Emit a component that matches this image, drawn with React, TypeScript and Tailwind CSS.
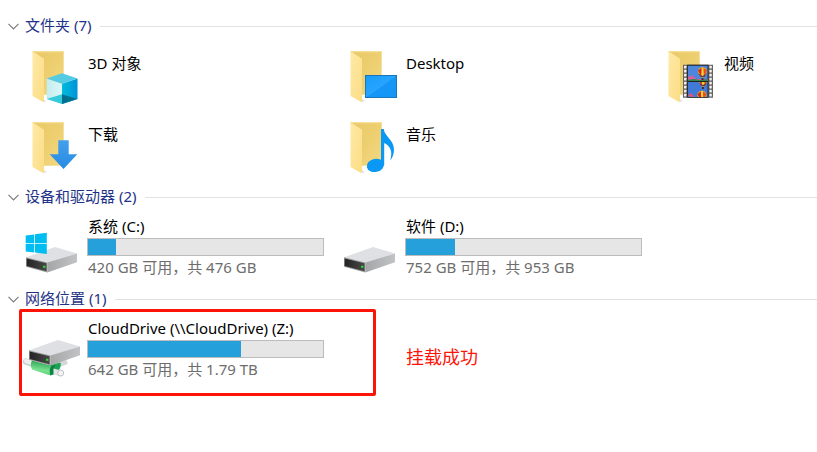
import type { ReactNode } from "react";

const FONT = "font-['Noto_Sans','Noto_Sans_CJK_SC',sans-serif]";

function FolderIcon({ id, children }: { id: string; children: ReactNode }) {
  return (
    <svg viewBox="0 0 60 64" className="h-16 w-[60px] shrink-0" aria-hidden="true">
      <defs>
        <linearGradient id={`${id}-back`} x1="0" y1="0" x2="1" y2="1">
          <stop offset="0" stopColor="#e9c968" />
          <stop offset="0.5" stopColor="#edcf70" />
          <stop offset="1" stopColor="#f3d983" />
        </linearGradient>
        <linearGradient id={`${id}-flap`} x1="0" y1="0" x2="1" y2="1">
          <stop offset="0" stopColor="#ffe9a6" />
          <stop offset="1" stopColor="#fbdd85" />
        </linearGradient>
      </defs>
      <path d="M23 58.5 27 57 24 55Z" fill="#e4e4e4" />
      <path d="M12.5 7.3H43.7V50.7H22Z" fill={`url(#${id}-back)`} />
      <path d="M12.5 7.3H43.7V8.3H14Z" fill="#f8e09a" />
      <path d="M12.5 7.3 24 14.8V56.5L23 58 12.5 52Z" fill={`url(#${id}-flap)`} />
      {children}
    </svg>
  );
}

function ObjectsIcon() {
  return (
    <FolderIcon id="objects">
      <defs>
        <linearGradient id="cube-left"><stop offset="0" stopColor="#c3edf0" /><stop offset="1" stopColor="#dcf7f7" /></linearGradient>
        <linearGradient id="cube-right"><stop offset="0" stopColor="#00bcdc" /><stop offset="1" stopColor="#0092d8" /></linearGradient>
      </defs>
      <path d="M24 51.5H27V57L24 56Z" fill="#fff" />
      <path d="M26.7 34.6 42 39.8V60L26.7 55Z" fill="url(#cube-left)" />
      <path d="M42 39.8 57.5 34.6V55L42 60Z" fill="url(#cube-right)" />
      <path d="M26.7 34.6 42 29.3 57.5 34.6 42 39.8Z" fill="#52cbe3" />
      <path d="M26.7 55 42 50.3V60Z" fill="#35cbdc" />
      <path d="M42 50.3 57.5 55 42 60Z" fill="#00708f" />
    </FolderIcon>
  );
}

function DesktopIcon() {
  return (
    <FolderIcon id="desktop">
      <defs>
        <linearGradient id="screen" x1="0" y1="0" x2="1" y2="1"><stop offset="0" stopColor="#189cfb" /><stop offset="0.5" stopColor="#27a5ff" /><stop offset="0.51" stopColor="#1697f7" /><stop offset="1" stopColor="#1295f7" /></linearGradient>
      </defs>
      <rect x="27.5" y="31.5" width="31" height="22" fill="url(#screen)" stroke="#1976b8" />
    </FolderIcon>
  );
}

function Balloon({ x, y }: { x: number; y: number }) {
  return (
    <g transform={`translate(${x} ${y})`}>
      <path d="M-4.8 0A4.8 4.8 0 0 1 4.8 0L1.5 5.5H-1.5Z" fill="#e6a51b" />
      <path d="M-4.6-1.5 0-4.8-1.5 4Z" fill="#cf2b23" />
      <path d="M0-4.8 4.6-1.5 2 4Z" fill="#e4512b" />
      <path d="M-1-4.6H1L0.8 4H-0.8Z" fill="#f7d537" />
      <path d="M-4.2 1.6 0 4 4.2 1.6 2 5H-2Z" fill="#6b3a4a" />
      <rect x="-1" y="6" width="2" height="2" fill="#3d302a" />
    </g>
  );
}

function VideoIcon() {
  const holes = [21.8, 25.8, 29.8, 33.8, 37.8, 41.8, 45.8, 49.8];
  return (
    <FolderIcon id="video">
      <defs>
        <clipPath id="frame-a"><rect x="32" y="21.7" width="19.6" height="15.3" /></clipPath>
        <clipPath id="frame-b"><rect x="32" y="38" width="19.6" height="15" /></clipPath>
      </defs>
      <path d="M27 20.7H57V53.7H27Z" fill="#626262" />
      <path d="M31.2 20.7H52.4V53.7H31.2Z" fill="#222" />
      {holes.map((y) => (
        <g key={y} fill="#f0f0f0">
          <rect x="28" y={y} width="2.4" height="2.6" rx="0.4" />
          <rect x="53.4" y={y} width="2.4" height="2.6" rx="0.4" />
        </g>
      ))}
      <g clipPath="url(#frame-a)">
        <path d="M31 21H52V38H31Z" fill="#4d86dc" />
        <path d="M31 31 34 33 36 31 40 35H52V38H31Z" fill="#d8609a" />
        <path d="M31 36 38 35 44 36 52 35V38H31Z" fill="#31854c" />
        <Balloon x={46.5} y={28} />
      </g>
      <g clipPath="url(#frame-b)">
        <path d="M31 38H52V53H31Z" fill="#4079d8" />
        <Balloon x={47} y={37} />
        <Balloon x={46} y={51.5} />
        <path d="M31 52 35 49 39 53Z" fill="#d55a73" />
      </g>
    </FolderIcon>
  );
}

function DownloadIcon() {
  return (
    <FolderIcon id="download">
      <defs><linearGradient id="arrow" x2="0" y2="1"><stop stopColor="#449fec" /><stop offset="1" stopColor="#258be4" /></linearGradient></defs>
      <path d="M38.3 25.3H48.7V39.2H57.3L43.5 54 29.7 39.2H38.3Z" fill="url(#arrow)" />
    </FolderIcon>
  );
}

function MusicIcon() {
  return (
    <FolderIcon id="music">
      <ellipse cx="37.4" cy="50.4" rx="8.7" ry="6.6" transform="rotate(-12 37.4 50.4)" fill="#0998f4" />
      <path d="M43 14H45.8C46.5 21.5 56 25 56 34.5 56 39 54.5 43 52.3 45.2 54.8 36.5 52.5 31 46.2 28V50H43Z" fill="#0998f4" />
    </FolderIcon>
  );
}

function DriveBody({ id }: { id: string }) {
  return (
    <>
      <defs>
        <linearGradient id={`${id}-side`}><stop stopColor="#a5a6a8" /><stop offset="1" stopColor="#c2c3c5" /></linearGradient>
        <linearGradient id={`${id}-front`}><stop stopColor="#242424" /><stop offset="1" stopColor="#484848" /></linearGradient>
      </defs>
      <path d="M6 40.3 35 30 57 36.5 27.5 45.8Z" fill="#dfe0e3" />
      <path d="M27.3 45.5 57 36.5V45.3L27.3 55.6Z" fill={`url(#${id}-side)`} />
      <path d="M6 40.3 27.3 45.5V55.6L6 49.7Z" fill="#9b9b9b" />
      <path d="M6.7 41.4 26.5 46.3V54.2L6.7 49Z" fill={`url(#${id}-front)`} />
      <rect x="23" y="48.8" width="2.4" height="2" fill="#26dc2e" />
    </>
  );
}

function DriveIcon({ id, kind }: { id: string; kind: "system" | "local" | "network" }) {
  return (
    <svg viewBox="0 0 60 60" className="h-[60px] w-[60px] shrink-0" aria-hidden="true">
      {kind === "network" && (
        <>
          <defs>
            <linearGradient id="pipe" x1="0.1" y1="0" x2="-0.1" y2="1"><stop stopColor="#2fa957" /><stop offset="0.55" stopColor="#7be392" /><stop offset="1" stopColor="#35bd5e" /></linearGradient>
          </defs>
          <path d="M6 42.6 40 54" stroke="#cfd2d2" strokeWidth="6.4" strokeLinecap="round" />
          <path d="M6 42 40 53.4" stroke="#eef0f0" strokeWidth="4" strokeLinecap="round" />
          <path d="M36 46.5 45 43.5" stroke="#d5d8d8" strokeWidth="5" strokeLinecap="round" />
          <path d="M30 46 40.5 43.5Q41.5 48 38.5 51L30 55Z" fill="#1da353" />
          <path d="M12 41.5 31.5 46.8Q34.5 50 30.5 56.6L12 50.6Q9.6 46 12 41.5Z" fill="url(#pipe)" />
          <path d="M31.5 46.8Q28.4 51 30.5 56.6L34.5 55Q32.6 51 35.5 46Z" fill="#0c8443" />
          <path d="M33.5 49.5 40 51.3V57L33.5 55Z" fill="#e3e6e6" />
          <circle cx="40.7" cy="54" r="3" fill="#f5f5f5" stroke="#bfc3c3" />
        </>
      )}
      <g transform={kind === "network" ? "translate(3 -9)" : undefined}>
        <DriveBody id={id} />
      </g>
      {kind === "system" && (
        <path d="M5.7 18.5 14.2 17.4V26H5.7ZM15 17.2 26.8 15.7V26H15ZM5.7 26.8H14.2V35.6L5.7 34.5ZM15 26.8H26.8V37L15 35.6Z" fill="#00bdf2" />
      )}
    </svg>
  );
}

function GroupHeading({ title, count }: { title: string; count: number }) {
  return (
    <h2 className="flex h-5 items-center">
      <button type="button" aria-expanded="true" className="flex items-center gap-[6px] whitespace-nowrap pl-2 leading-5 text-[#1e3287]">
        <svg viewBox="0 0 11 7" className="h-[7px] w-[11px]" fill="none" stroke="#7c7c7c" strokeWidth="1.2" aria-hidden="true">
          <path d="M0.5 0.8 5.5 5.8 10.5 0.8" />
        </svg>
        <span className="pb-0.5">{title} ({count})</span>
      </button>
      <span className="ml-2 h-px flex-1 bg-[#e2e2e2]" />
    </h2>
  );
}

function Drive({ name, detail, used, icon }: { name: string; detail: string; used: number; icon: ReactNode }) {
  return (
    <div className="flex gap-[7px]">
      {icon}
      <div className="w-[237px]">
        <div className="whitespace-nowrap pb-0.5 pl-px leading-[18px]">{name}</div>
        <div role="meter" aria-label={name} aria-valuenow={used} aria-valuemin={0} aria-valuemax={100} className="mt-px h-[18px] border border-[#bcbcbc] bg-[#e6e6e6]">
          <div className="h-full bg-[#26a0da]" style={{ width: `${used}%` }} />
        </div>
        <div className="mt-px whitespace-nowrap pl-px leading-5 text-[#6d6d6d]">{detail}</div>
      </div>
    </div>
  );
}

const folders = [
  { name: "3D 对象", icon: <ObjectsIcon /> },
  { name: "Desktop", icon: <DesktopIcon /> },
  { name: "视频", icon: <VideoIcon /> },
  { name: "下载", icon: <DownloadIcon /> },
  { name: "音乐", icon: <MusicIcon /> },
];

export default function App() {
  return (
    <main lang="zh-CN" className={`min-h-screen bg-white pt-4 text-[15px] text-black ${FONT}`}>
      <section>
        <GroupHeading title="文件夹" count={7} />
        <ul className="grid grid-cols-[318px_318px_minmax(0,1fr)] pt-2 pl-5">
          {folders.map((f) => (
            <li key={f.name} className="flex h-[71px] gap-[7px]">
              {f.icon}
              <span className="pt-[9px] pl-px leading-5">{f.name}</span>
            </li>
          ))}
        </ul>
      </section>
      <section className="mt-px">
        <GroupHeading title="设备和驱动器" count={2} />
        <div className="grid grid-cols-[318px_318px] pt-[10px] pl-5">
          <Drive name="系统 (C:)" detail="420 GB 可用，共 476 GB" used={12} icon={<DriveIcon id="c" kind="system" />} />
          <Drive name="软件 (D:)" detail="752 GB 可用，共 953 GB" used={21} icon={<DriveIcon id="d" kind="local" />} />
        </div>
      </section>
      <section className="mt-3">
        <GroupHeading title="网络位置" count={1} />
        <div className="flex items-center pl-[19px]">
          <div className="w-[357px] rounded-[2px] border-3 border-[#fd1409] pt-[7px] pb-[14px]">
            <div className="-ml-0.5">
              <Drive name="CloudDrive (\\CloudDrive) (Z:)" detail="642 GB 可用，共 1.79 TB" used={65} icon={<DriveIcon id="z" kind="network" />} />
            </div>
          </div>
          <p className="pt-2 pl-[30px] text-[18px] leading-6 text-[#fd1409]">挂载成功</p>
        </div>
      </section>
    </main>
  );
}
